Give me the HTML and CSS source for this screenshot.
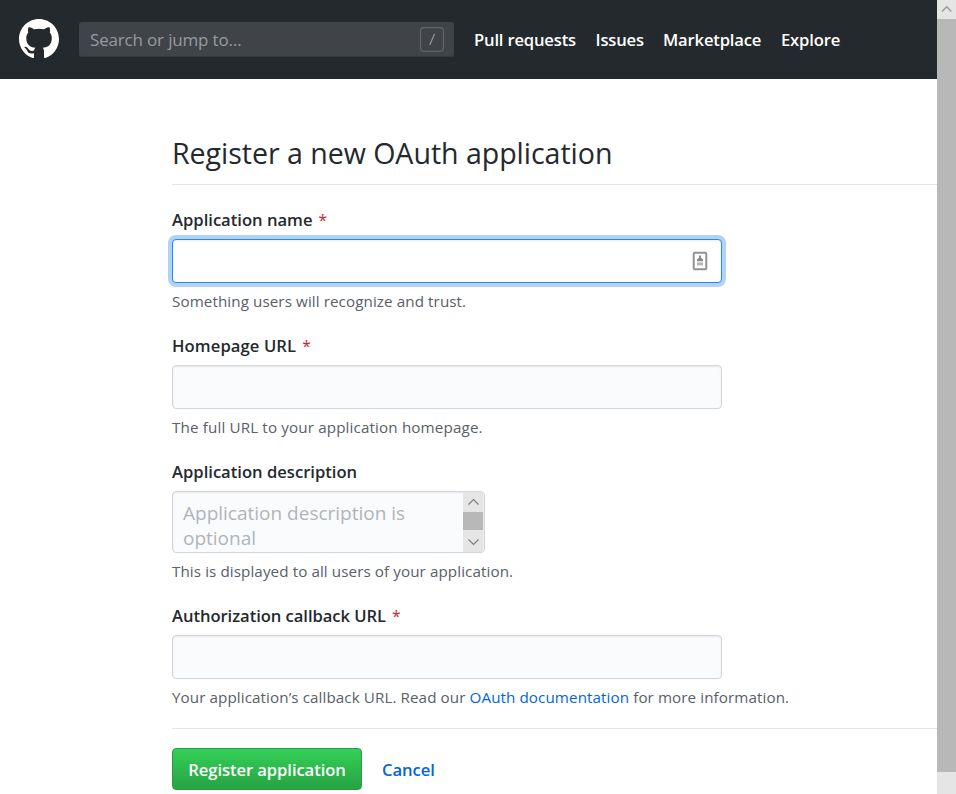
FILE: index.html
```html
<!DOCTYPE html>
<html lang="en">
<head>
<meta charset="utf-8">
<title>Register a new OAuth application</title>
<link rel="stylesheet" href="styles.css">
</head>
<body>
<div class="page">
  <header class="header">
    <a class="logo" href="#" aria-label="GitHub"><svg viewBox="0 0 16 16" width="40" height="40" fill="#fff"><path fill-rule="evenodd" d="M8 0C3.58 0 0 3.58 0 8c0 3.54 2.29 6.53 5.47 7.59.4.07.55-.17.55-.38 0-.19-.01-.82-.01-1.49-2.01.37-2.53-.49-2.69-.94-.09-.23-.48-.94-.82-1.13-.28-.15-.68-.52-.01-.53.63-.01 1.08.58 1.23.82.72 1.21 1.87.87 2.33.66.07-.52.28-.87.51-1.07-1.78-.2-3.64-.89-3.64-3.95 0-.87.31-1.59.82-2.15-.08-.2-.36-1.02.08-2.12 0 0 .67-.21 2.2.82.64-.18 1.32-.27 2-.27.68 0 1.36.09 2 .27 1.53-1.04 2.2-.82 2.2-.82.44 1.1.16 1.92.08 2.12.51.56.82 1.27.82 2.15 0 3.07-1.87 3.75-3.65 3.95.29.25.54.73.54 1.48 0 1.07-.01 1.93-.01 2.2 0 .21.15.46.55.38A8.013 8.013 0 0016 8c0-4.42-3.58-8-8-8z"/></svg></a>
    <div class="search">
      <span class="search-text">Search or jump to…</span>
      <svg class="slash" width="24" height="25" viewBox="0 0 24 25" fill="none"><rect x=".6" y=".6" width="22.8" height="23.8" rx="3.5" stroke="#60656a" stroke-width="1.2"/><path d="M14.5 7 9.7 18" stroke="#989b9e" stroke-width="1.1"/></svg>
    </div>
    <nav class="nav">
      <a class="nav-pull" href="#">Pull requests</a>
      <a class="nav-issues" href="#">Issues</a>
      <a class="nav-market" href="#">Marketplace</a>
      <a class="nav-explore" href="#">Explore</a>
    </nav>
  </header>
  <main class="content">
    <h1 class="title">Register a new OAuth application</h1>
    <form>
      <div class="group">
        <div class="label"><span>Application name</span><span class="required">*</span></div>
        <div class="input focused">
          <svg width="16" height="20" viewBox="0 0 16 20"><rect x="1.7" y="1.7" width="12.6" height="16.6" rx="1" fill="#fff" stroke="#929292" stroke-width="2"/><path d="M7 4.5h2v2.2l2 1.5v2H5v-2l2-1.5z" fill="#8b8b8b"/><path d="M5 11.4h6v3H5z" fill="#b5b5b5"/></svg>
        </div>
        <p class="note">Something users will recognize and trust.</p>
      </div>
      <div class="group">
        <div class="label"><span class="label-home">Homepage URL</span><span class="required">*</span></div>
        <div class="input"></div>
        <p class="note note-home">The full URL to your application homepage.</p>
      </div>
      <div class="group">
        <div class="label"><span>Application description</span></div>
        <div class="textarea">
          <div class="placeholder">Application description is<br>optional</div>
          <div class="area-scroll">
            <svg width="20" height="20" viewBox="0 0 20 20"><path d="m5.5 12.5 5-5 5 5"/></svg>
            <div class="area-thumb"></div>
            <svg width="20" height="20" viewBox="0 0 20 20"><path d="m5.5 9.5 5 5 5-5"/></svg>
          </div>
        </div>
        <p class="note">This is displayed to all users of your application.</p>
      </div>
      <div class="group">
        <div class="label"><span class="label-auth">Authorization callback URL</span><span class="required">*</span></div>
        <div class="input"></div>
        <p class="note">Your application’s callback URL. Read our <a href="#">OAuth documentation</a> for more information.</p>
      </div>
      <div class="actions">
        <button class="submit" type="button">Register application</button>
        <a class="cancel" href="#">Cancel</a>
      </div>
    </form>
  </main>
</div>
<div class="scrollbar">
  <svg width="19" height="19" viewBox="0 0 19 19"><path d="m5 11.5 4.7-4.7 4.7 4.7"/></svg>
  <div class="thumb"></div>
</div>
</body>
</html>
```

FILE: styles.css
```css
* { box-sizing: border-box; }
body {
  margin: 0;
  height: 794px;
  display: flex;
  overflow: hidden;
  background: #fff;
  color: #24292e;
  font-family: "Open Sans", "Noto Sans", sans-serif;
}
a { color: #0366d6; text-decoration: none; }
.page { width: 937px; height: 794px; overflow: hidden; }
.header {
  height: 79px;
  padding: 0 19px;
  background: #24292e;
  display: flex;
  align-items: center;
}
.logo { display: flex; height: 40px; margin: 0 20px 1px 0; }
.search {
  width: 375px;
  height: 35px;
  padding: 0 10px 0 11px;
  border-radius: 3px;
  background: #404448;
  box-shadow: inset 0 -1px 1px #383c40;
  display: flex;
  align-items: center;
  justify-content: space-between;
  color: #989b9e;
  font-size: 17px;
  letter-spacing: -.17px;
}
.nav {
  margin-left: 20px;
  display: flex;
  gap: 20px;
  font-size: 16.6px;
  font-weight: 600;
  letter-spacing: -.17px;
}
.nav a { color: #fff; white-space: nowrap; }
.nav-pull { width: 101.5px; }
.nav-issues { width: 47.5px; }
.nav-market { width: 98px; }
.content { width: 980px; padding: 54px 0 0 172px; }
.title {
  margin: 0;
  height: 52px;
  border-bottom: 1px solid #dfe4e8;
  font-size: 28.6px;
  font-weight: 400;
  letter-spacing: -.05px;
  line-height: 39px;
  white-space: nowrap;
}
form { padding-top: 22px; }
.group { margin-bottom: 18px; }
.label {
  height: 26px;
  margin-bottom: 6px;
  display: flex;
  font-size: 16.6px;
  font-weight: 600;
  line-height: 26px;
  white-space: nowrap;
}
.label-home { letter-spacing: .1px; }
.label-auth { letter-spacing: -.05px; }
.required { margin-left: 6px; color: #cb2431; font-size: 15.5px; font-weight: 400; }
.input, .textarea {
  border: 1px solid #d1d5da;
  border-radius: 4px;
  background: #fafbfc;
  box-shadow: inset 0 1px 2px rgba(27, 31, 35, .09);
}
.input {
  width: 550px;
  height: 44px;
  padding-right: 13px;
  display: flex;
  align-items: center;
  justify-content: flex-end;
}
.focused {
  border-color: #2188ff;
  background: #fff;
  box-shadow: inset 0 1px 2px rgba(27, 31, 35, .09), 0 0 0 4px #b3d1f3;
}
.textarea {
  width: 313px;
  height: 62px;
  display: flex;
  justify-content: space-between;
  overflow: hidden;
}
.placeholder {
  padding: 9px 0 0 10px;
  color: #b0b4ba;
  font-size: 19px;
  line-height: 25px;
  white-space: nowrap;
}
.area-scroll { width: 21px; background: #e5e5e5; border-right: 1px solid #ededed; }
.area-scroll svg { display: block; fill: none; stroke: #7d7d7d; stroke-width: 1.1; }
.area-thumb { height: 18px; background: #b8b8b8; }
.note {
  margin: 5px 0 0;
  height: 27px;
  color: #586069;
  font-size: 15.2px;
  letter-spacing: .09px;
  line-height: 26px;
  white-space: nowrap;
}
.note-home { letter-spacing: .14px; }
.actions {
  margin-top: 17px;
  padding-top: 19px;
  border-top: 1px solid #e1e4e8;
  display: flex;
  align-items: center;
  gap: 20px;
  font-size: 16.6px;
  font-weight: 600;
  letter-spacing: -.07px;
}
.group:nth-of-type(4) { margin-bottom: 0; }
.submit {
  width: 190px;
  height: 42px;
  padding: 0;
  border: 1px solid #2a9a45;
  border-radius: 4px;
  background: linear-gradient(#34d058, #28a745 90%);
  color: #fff;
  font: inherit;
  letter-spacing: inherit;
  white-space: nowrap;
}
.scrollbar { width: 19px; height: 794px; background: #e5e5e5; }
.scrollbar svg { display: block; fill: none; stroke: #999; stroke-width: 1.5; }
.thumb { height: 753px; background: #b8b8b8; }
```
